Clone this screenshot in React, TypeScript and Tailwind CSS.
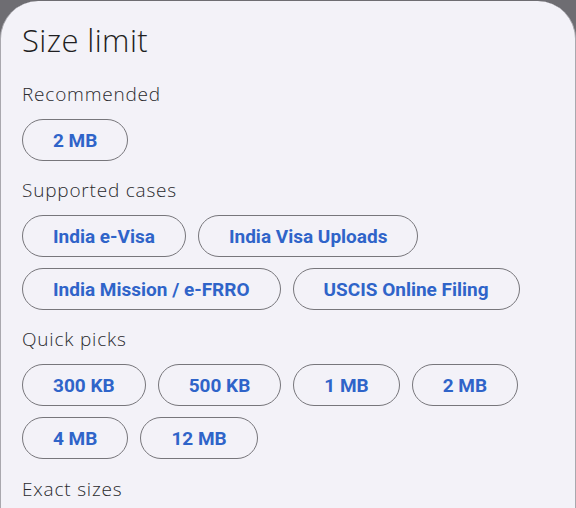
import React from "react";

const Chip = ({ label }: { label: string }) => (
  <button className="h-[42px] px-[30px] rounded-full border border-[#77767b] bg-transparent text-[19px] font-bold text-[#2f64c9] [font-family:Roboto,'Liberation_Sans',sans-serif] leading-none">
    {label}
  </button>
);

const Label = ({ children }: { children: React.ReactNode }) => (
  <div className="h-6 leading-6 text-[19px] font-light text-[#2a2a2e] [font-family:'Open_Sans',sans-serif] tracking-[0.8px]">
    {children}
  </div>
);

export default function App() {
  return (
    <div className="w-[576px] h-[508px] bg-[#6e6d72] pt-px overflow-hidden">
      <div className="h-[520px] bg-[#f3f2f8] rounded-t-[38px] border-x-[1.5px] border-[#a9a8ae] pl-[21px] pt-[21px]">
        <div className="h-9 leading-9 text-[31px] font-light text-[#1f1f22] [font-family:'Open_Sans',sans-serif] tracking-[0.4px]">
          Size limit
        </div>
        <div className="mt-6">
          <Label>Recommended</Label>
        </div>
        <div className="mt-[13px] flex flex-wrap gap-x-3 gap-y-[11px]">
          <Chip label="2 MB" />
        </div>
        <div className="mt-[17px]">
          <Label>Supported cases</Label>
        </div>
        <div className="mt-[13px] flex flex-wrap gap-x-3 gap-y-[11px] w-[520px]">
          <Chip label="India e-Visa" />
          <Chip label="India Visa Uploads" />
          <Chip label="India Mission / e-FRRO" />
          <Chip label="USCIS Online Filing" />
        </div>
        <div className="mt-[17px]">
          <Label>Quick picks</Label>
        </div>
        <div className="mt-[13px] flex flex-wrap gap-x-3 gap-y-[11px] w-[520px]">
          {["300 KB", "500 KB", "1 MB", "2 MB", "4 MB", "12 MB"].map((s, i) => (
            <Chip key={i} label={s} />
          ))}
        </div>
        <div className="mt-[18px]">
          <Label>Exact sizes</Label>
        </div>
      </div>
    </div>
  );
}
